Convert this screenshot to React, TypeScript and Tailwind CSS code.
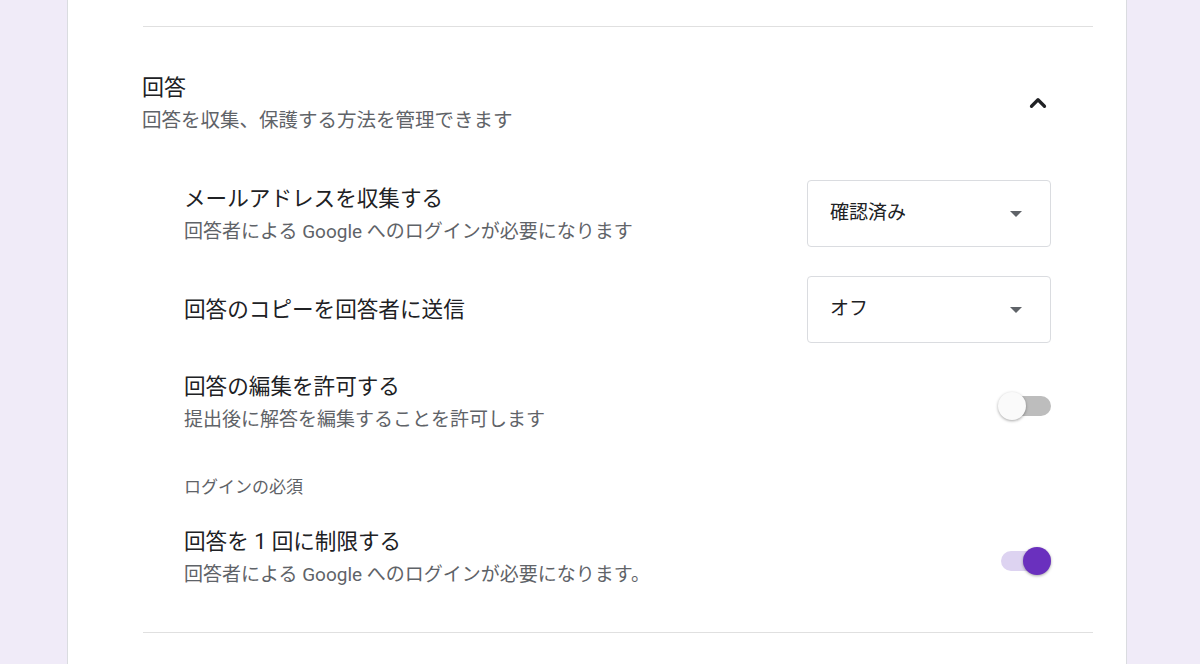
import { ChevronUp } from "lucide-react";

type Row = {
	title: string;
	description?: string;
	control: "select" | "switch";
	value?: string;
	checked?: boolean;
};

const FONT = {
	fontFamily: 'Roboto, "Noto Sans CJK JP", "Noto Sans", sans-serif',
};

function Select({ value }: { value: string }) {
	return (
		<div className="flex h-[67px] w-[244px] shrink-0 items-center justify-between rounded-[4px] border border-[#dadce0] pl-[22px] pr-[28px]">
			<span className="text-[19px] text-[#202124]">{value}</span>
			<svg width="12" height="6" viewBox="0 0 12 6" className="text-[#5f6368]">
				<path d="M0 0h12L6 6z" fill="currentColor" />
			</svg>
		</div>
	);
}

function Switch({ checked }: { checked: boolean }) {
	return (
		<div className="relative mt-[7px] flex h-[30px] w-[53px] shrink-0 items-center">
			<div
				className={`ml-[3px] h-[20px] w-[50px] rounded-full ${
					checked ? "bg-[#ddd3f1]" : "bg-[#bdbdbd]"
				}`}
			/>
			<div
				className={`absolute top-[1px] h-[28px] w-[28px] rounded-full shadow-[0_1px_3px_rgba(0,0,0,0.35)] ${
					checked ? "right-0 bg-[#6a30be]" : "left-0 bg-[#fafafa]"
				}`}
			/>
		</div>
	);
}

function SettingRow({ row }: { row: Row }) {
	return (
		<div className="flex items-center justify-between">
			<div>
				<div className="text-[21.6px] leading-[32px] text-[#202124]">
					{row.title}
				</div>
				{row.description && (
					<div className="mt-1 text-[19px] leading-[26px] text-[#5f6368]">
						{row.description}
					</div>
				)}
			</div>
			{row.control === "select" ? (
				<Select value={row.value ?? ""} />
			) : (
				<Switch checked={!!row.checked} />
			)}
		</div>
	);
}

export default function App() {
	return (
		<div className="flex h-[664px] w-[1200px] overflow-hidden bg-[#f0ebf8]" style={FONT}>
			<div className="ml-[67px] h-full w-[1060px] border-x border-[#dadce0] bg-white pl-[75px] pr-[33px]">
				<div className="h-[26px]" />
				<div className="h-px bg-[#e0e0e0]" />

				<div className="mt-[45px] flex items-center justify-between">
					<div className="-ml-px">
						<h2 className="text-[22px] leading-[32px] text-[#202124]">回答</h2>
						<p className="mt-1 text-[19.5px] leading-[26px] text-[#5f6368]">
							回答を収集、保護する方法を管理できます
						</p>
					</div>
					<ChevronUp size={26} strokeWidth={3} className="mr-[42px] text-[#202124]" />
				</div>

				<div className="pl-[41px] pr-[42px]">
					<div className="mt-[46px]">
						<SettingRow
							row={{
								title: "メールアドレスを収集する",
								description: "回答者による Google へのログインが必要になります",
								control: "select",
								value: "確認済み",
							}}
						/>
					</div>
					<div className="mt-[29px]">
						<SettingRow
							row={{
								title: "回答のコピーを回答者に送信",
								control: "select",
								value: "オフ",
							}}
						/>
					</div>
					<div className="mt-[28px]">
						<SettingRow
							row={{
								title: "回答の編集を許可する",
								description: "提出後に解答を編集することを許可します",
								control: "switch",
								checked: false,
							}}
						/>
					</div>
					<div className="mt-[42px] text-[17px] leading-[24px] text-[#5f6368]">
						ログインの必須
					</div>
					<div className="mt-[27px]">
						<SettingRow
							row={{
								title: "回答を 1 回に制限する",
								description: "回答者による Google へのログインが必要になります。",
								control: "switch",
								checked: true,
							}}
						/>
					</div>
				</div>

				<div className="mt-[44px] h-px bg-[#e0e0e0]" />
			</div>
		</div>
	);
}
